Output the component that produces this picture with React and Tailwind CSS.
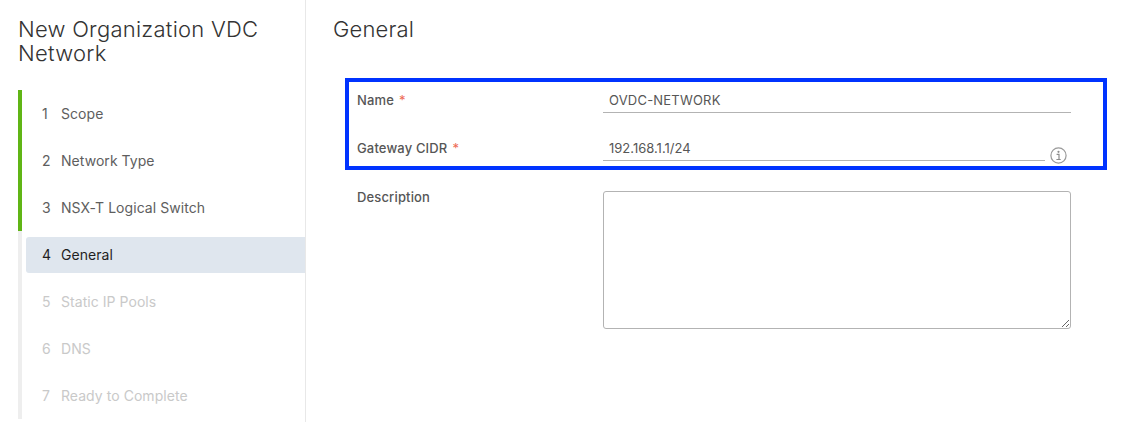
const steps = [
  { n: 1, label: 'Scope', state: 'done' },
  { n: 2, label: 'Network Type', state: 'done' },
  { n: 3, label: 'NSX-T Logical Switch', state: 'done' },
  { n: 4, label: 'General', state: 'active' },
  { n: 5, label: 'Static IP Pools', state: 'todo' },
  { n: 6, label: 'DNS', state: 'todo' },
  { n: 7, label: 'Ready to Complete', state: 'todo' },
];

function StepRow({ step }) {
  const active = step.state === 'active';
  const todo = step.state === 'todo';
  return (
    <div className={`flex h-[47px] pl-[4px] border-l-4 ${step.state === 'done' ? 'border-[#60b515]' : 'border-[#eeeeee]'} items-center`}>
      <div className={`flex h-[36px] flex-1 items-center rounded-l-[3px] pl-[16px] text-[14px] tracking-[0.05px] ${active ? 'bg-[#dfe6ee] text-[#1f1f1f]' : todo ? 'text-[#c9c9c9]' : 'text-[#5e5e5e]'}`}>
        <span className="w-[19px]">{step.n}</span>
        <span>{step.label}</span>
      </div>
    </div>
  );
}

function InfoIcon() {
  return (
    <svg width="17" height="17" viewBox="0 0 17 17" fill="none" className="mt-[10px] shrink-0">
      <circle cx="8.5" cy="8.5" r="7.6" stroke="#999999" strokeWidth="1.2" />
      <circle cx="8.5" cy="4.8" r="1.1" fill="#8c8c8c" />
      <path d="M6.6 7.3h2.4v5M6.4 12.5h4.3" stroke="#8c8c8c" strokeWidth="1.2" />
    </svg>
  );
}

function Label({ text, required }) {
  return (
    <div className="w-[246px] shrink-0 text-[13px] font-medium tracking-[0.15px] text-[#565656]">
      {text}
      {required && <span className="ml-[5px] font-normal text-[#ee6a55]">*</span>}
    </div>
  );
}

function TextField({ value, wide }) {
  return (
    <input
      readOnly
      value={value}
      className={`block h-[24px] w-full border-b border-[#b3b3b3] pb-[1px] pl-[6px] text-[13px] text-[#565656] outline-none ${wide ? 'tracking-[0.2px]' : 'tracking-normal'}`}
    />
  );
}

export default function App() {
  return (
    <div className="flex h-[422px] w-[1137px] overflow-hidden bg-white font-['Inter',sans-serif]">
      <div className="w-[306px] shrink-0 border-r border-[#e8e8e8] pl-[18px]">
        <h2 className="mt-[17px] text-[22px] leading-[24px] font-light tracking-[0.25px] text-[#333333]">
          New Organization VDC Network
        </h2>
        <div className="mt-[25px]">
          {steps.map((step) => (
            <StepRow key={step.n} step={step} />
          ))}
        </div>
      </div>

      <div className="flex-1 pl-[27px]">
        <h3 className="mt-[17px] text-[22px] leading-[24px] font-light tracking-[0.15px] text-[#333333]">General</h3>

        <div className="mt-[37px] ml-[12px] h-[92px] w-[762px] border-4 border-[#0033ff] pt-[7px] pl-[8px]">
          <div className="flex items-center">
            <Label text="Name" required />
            <div className="w-[468px]">
              <TextField value="OVDC-NETWORK" wide />
            </div>
          </div>
          <div className="mt-[24px] flex items-center">
            <Label text="Gateway CIDR" required />
            <div className="flex h-[24px] w-[464px] items-start gap-[5px]">
              <div className="w-[442px]">
                <TextField value="192.168.1.1/24" />
              </div>
              <InfoIcon />
            </div>
          </div>
        </div>

        <div className="mt-[21px] ml-[24px] flex">
          <div className="mt-[-3px]">
            <Label text="Description" />
          </div>
          <textarea
            readOnly
            className="block h-[138px] w-[468px] rounded-[3px] border border-[#b3b3b3] outline-none"
          />
        </div>
      </div>
    </div>
  );
}
